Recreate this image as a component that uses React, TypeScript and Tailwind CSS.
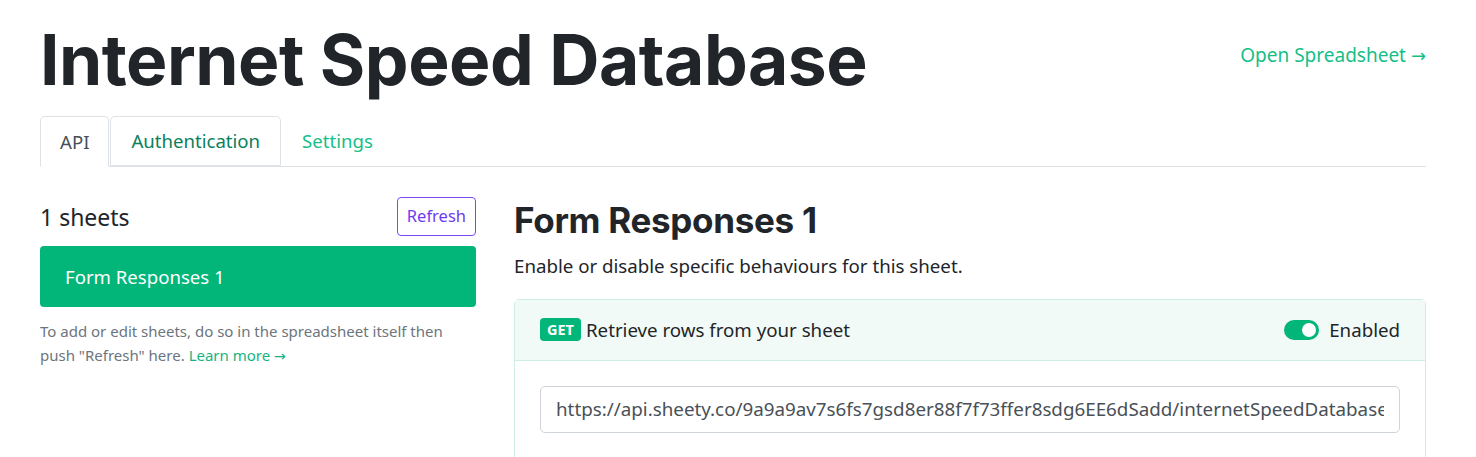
export default function App() {
  const url =
    'https://api.sheety.co/9a9a9av7s6fs7gsd8er88f7f73ffer8sdg6EE6dSadd/internetSpeedDatabase/formResponses1'

  return (
    <div className="min-h-[457px] bg-white text-[#212529] font-['Noto_Sans',sans-serif]">
      <div className="pl-10 pr-[50px] pt-[18px]">
        {/* Title row */}
        <div className="flex items-center justify-between">
          <h1 className="font-['Inter',sans-serif] text-[69.5px] font-bold leading-[84px] tracking-[-0.5px] text-[#212529]">
            Internet Speed Database
          </h1>
          <a href="#" className="mt-[-10px] text-[19px] text-[#14bf87]">
            Open Spreadsheet <span className="font-['DejaVu_Sans',sans-serif] text-[18px]">→</span>
          </a>
        </div>

        {/* Tabs */}
        <div className="mt-[14px] flex border-b border-[#dee2e6] text-[18.6px]">
          <div className="-mb-px flex h-[51px] items-center rounded-t-[5px] border border-[#dee2e6] border-b-white bg-white px-[19px] text-[#495057]">
            API
          </div>
          <div className="ml-px flex h-[50px] items-center rounded-t-[5px] border border-[#dee2e6] px-[20px] text-[#0a7f5c]">
            Authentication
          </div>
          <div className="flex h-[50px] items-center px-[21px] text-[#14bf87]">Settings</div>
        </div>

        {/* Body */}
        <div className="mt-[30px] flex gap-[38px]">
          {/* Sidebar */}
          <div className="w-[436px] shrink-0">
            <div className="flex items-center justify-between">
              <div className="text-[23px] leading-8">1 sheets</div>
              <button className="h-[39px] rounded-[4px] border border-[#7a49f5] px-[9px] text-[16.5px] text-[#6e3cf0]">
                Refresh
              </button>
            </div>
            <div className="mt-[10px] flex h-[61px] items-center rounded-[4px] bg-[#02b579] px-[25px] text-[18.6px] text-white">
              Form Responses 1
            </div>
            <p className="mt-[12px] text-[15px] leading-6 text-[#6c757d]">
              To add or edit sheets, do so in the spreadsheet itself then push "Refresh" here.{' '}
              <a href="#" className="text-[#14b482]">
                Learn more <span className="font-['DejaVu_Sans',sans-serif] text-[14px]">→</span>
              </a>
            </p>
          </div>

          {/* Main */}
          <div className="min-w-0 flex-1">
            <h2 className="mt-[3px] font-['Inter',sans-serif] text-[35px] font-bold leading-10 tracking-[-0.3px]">
              Form Responses 1
            </h2>
            <p className="mt-[12px] text-[18.7px] leading-7">Enable or disable specific behaviours for this sheet.</p>

            <div className="mt-[19px] rounded-t-[5px] border border-[#cdeee2]">
              <div className="flex h-[61px] items-center justify-between border-b border-[#cdeee2] bg-[#f1faf6] px-[25px]">
                <div className="flex items-center gap-[5px]">
                  <span className="rounded-[4px] bg-[#02b579] px-[7px] py-[1px] text-[14.5px] font-bold leading-[21px] text-white">
                    GET
                  </span>
                  <span className="text-[18.7px]">Retrieve rows from your sheet</span>
                </div>
                <div className="flex items-center gap-[10px]">
                  <div className="flex h-[20px] w-[35px] items-center justify-end rounded-full bg-[#02b579] pr-[3px]">
                    <div className="h-[14px] w-[14px] rounded-full bg-white" />
                  </div>
                  <span className="text-[18.7px]">Enabled</span>
                </div>
              </div>
              <div className="px-[25px] pt-[25px] pb-[30px]">
                <div className="flex h-[47px] items-center rounded-[5px] border border-[#ced4da] px-[15px]">
                  <div className="min-w-0 flex-1 overflow-hidden whitespace-nowrap text-[18.8px] text-[#495057]">{url}</div>
                </div>
              </div>
            </div>
          </div>
        </div>
      </div>
    </div>
  )
}
